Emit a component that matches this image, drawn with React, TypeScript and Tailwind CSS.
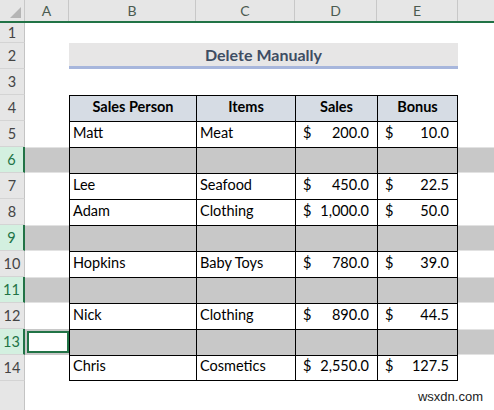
import React from "react";

type Row = {
  n: number;
  person?: string;
  item?: string;
  sales?: string;
  bonus?: string;
  gray?: boolean;
};

const rows: Row[] = [
  { n: 5, person: "Matt", item: "Meat", sales: "200.0", bonus: "10.0" },
  { n: 6, gray: true },
  { n: 7, person: "Lee", item: "Seafood", sales: "450.0", bonus: "22.5" },
  { n: 8, person: "Adam", item: "Clothing", sales: "1,000.0", bonus: "50.0" },
  { n: 9, gray: true },
  { n: 10, person: "Hopkins", item: "Baby Toys", sales: "780.0", bonus: "39.0" },
  { n: 11, gray: true },
  { n: 12, person: "Nick", item: "Clothing", sales: "890.0", bonus: "44.5" },
  { n: 13, gray: true },
  { n: 14, person: "Chris", item: "Cosmetics", sales: "2,550.0", bonus: "127.5" },
];

const RowHead = ({ n, selected, h = "h-[26px]" }: { n?: number; selected?: boolean; h?: string }) => (
  <div
    className={`${h} w-[25px] shrink-0 flex items-center justify-center border-b border-[#d4d4d4] text-[14.5px] ${
      selected
        ? "bg-[#d3f0e0] text-[#217346] border-r-2 border-r-[#217346]"
        : "bg-[#e6e6e6] text-[#444] border-r border-r-[#c4c4c4]"
    }`}
  >
    {n}
  </div>
);

const Money = ({ value, w, last }: { value?: string; w: string; last?: boolean }) => (
  <div
    className={`${w} shrink-0 flex items-end justify-between pl-[7px] pr-[8px] pb-[3px] border-l border-t border-black ${
      last ? "border-r" : ""
    }`}
  >
    {value && (
      <>
        <span>$</span>
        <span>{value}</span>
      </>
    )}
  </div>
);

export default function App() {
  return (
    <div
      className="w-[494px] h-[410px] overflow-hidden bg-white text-[14.5px] text-black"
      style={{ fontFamily: "Lato, 'Open Sans', sans-serif" }}
    >
      {/* column headers */}
      <div className="flex h-[23px] bg-[#e6e6e6] border-b-2 border-[#217346] text-[14px] text-[#4a5a50]">
        <div className="w-[25px] shrink-0 relative border-r border-[#c8c8c8]">
          <div className="absolute right-[3px] bottom-[3px] w-0 h-0 border-l-[11px] border-l-transparent border-b-[11px] border-b-[#b5b5b5]" />
        </div>
        {[
          ["A", "w-[44px]"],
          ["B", "w-[127px]"],
          ["C", "w-[99px]"],
          ["D", "w-[82px]"],
          ["E", "w-[81px]"],
        ].map(([l, w]) => (
          <div key={l} className={`${w} shrink-0 flex items-center justify-center border-r border-[#c8c8c8]`}>
            {l}
          </div>
        ))}
        <div className="flex-1" />
      </div>

      {/* row 1 */}
      <div className="flex h-[20px]">
        <RowHead n={1} h="h-[20px]" />
      </div>

      {/* row 2 title */}
      <div className="flex h-[26px]">
        <RowHead n={2} />
        <div className="w-[44px] shrink-0" />
        <div className="w-[389px] shrink-0 bg-[#e7e6e6] border-b-[3px] border-[#a7b6dc] flex items-center justify-center font-bold text-[16px] text-[#3e4d63]">
          Delete Manually
        </div>
      </div>

      {/* row 3 */}
      <div className="flex h-[26px]">
        <RowHead n={3} />
      </div>

      {/* row 4 header */}
      <div className="flex h-[26px]">
        <RowHead n={4} />
        <div className="w-[44px] shrink-0" />
        {[
          ["Sales Person", "w-[127px]"],
          ["Items", "w-[99px]"],
          ["Sales", "w-[82px]"],
          ["Bonus", "w-[81px]"],
        ].map(([t, w], i) => (
          <div
            key={t}
            className={`${w} shrink-0 flex items-end justify-center pb-[3px] bg-[#d6dce4] font-bold border-l border-t border-black ${
              i === 3 ? "border-r" : ""
            }`}
          >
            {t}
          </div>
        ))}
      </div>

      {rows.map((r) => (
        <div key={r.n} className={`flex h-[26px] ${r.gray ? "bg-[#c8c8c8]" : ""}`}>
          <RowHead n={r.n} selected={r.gray} />
          {r.n === 13 ? (
            <div className="w-[44px] shrink-0 py-[2px] pl-[2px]">
              <div className="h-full bg-white border-2 border-[#217346]" />
            </div>
          ) : (
            <div className={`w-[44px] shrink-0 ${r.gray ? "border-y border-[#e2e2e2]" : ""}`} />
          )}
          <div
            className={`w-[127px] shrink-0 flex items-end pl-[3px] pb-[3px] border-l border-t border-black ${
              r.n === 14 ? "border-b" : ""
            }`}
          >
            {r.person}
          </div>
          <div
            className={`w-[99px] shrink-0 flex items-end pl-[3px] pb-[3px] border-l border-t border-black ${
              r.n === 14 ? "border-b" : ""
            }`}
          >
            {r.item}
          </div>
          <Money value={r.sales} w={`w-[82px] ${r.n === 14 ? "border-b" : ""}`} />
          <Money value={r.bonus} w={`w-[81px] ${r.n === 14 ? "border-b" : ""}`} last />
          <div className={`flex-1 ${r.gray ? "border-y border-[#e2e2e2]" : ""}`} />
        </div>
      ))}

      {/* empty space below */}
      <div className="flex h-[30px]">
        <div className="w-[25px] shrink-0 bg-[#e6e6e6] border-r border-[#c4c4c4]" />
        <div
          className="flex-1 flex items-center justify-end pr-[11px] pt-[2px] text-[13px] text-[#222]"
          style={{ fontFamily: "'Liberation Sans', Arial, sans-serif" }}
        >
          wsxdn.com
        </div>
      </div>
    </div>
  );
}
